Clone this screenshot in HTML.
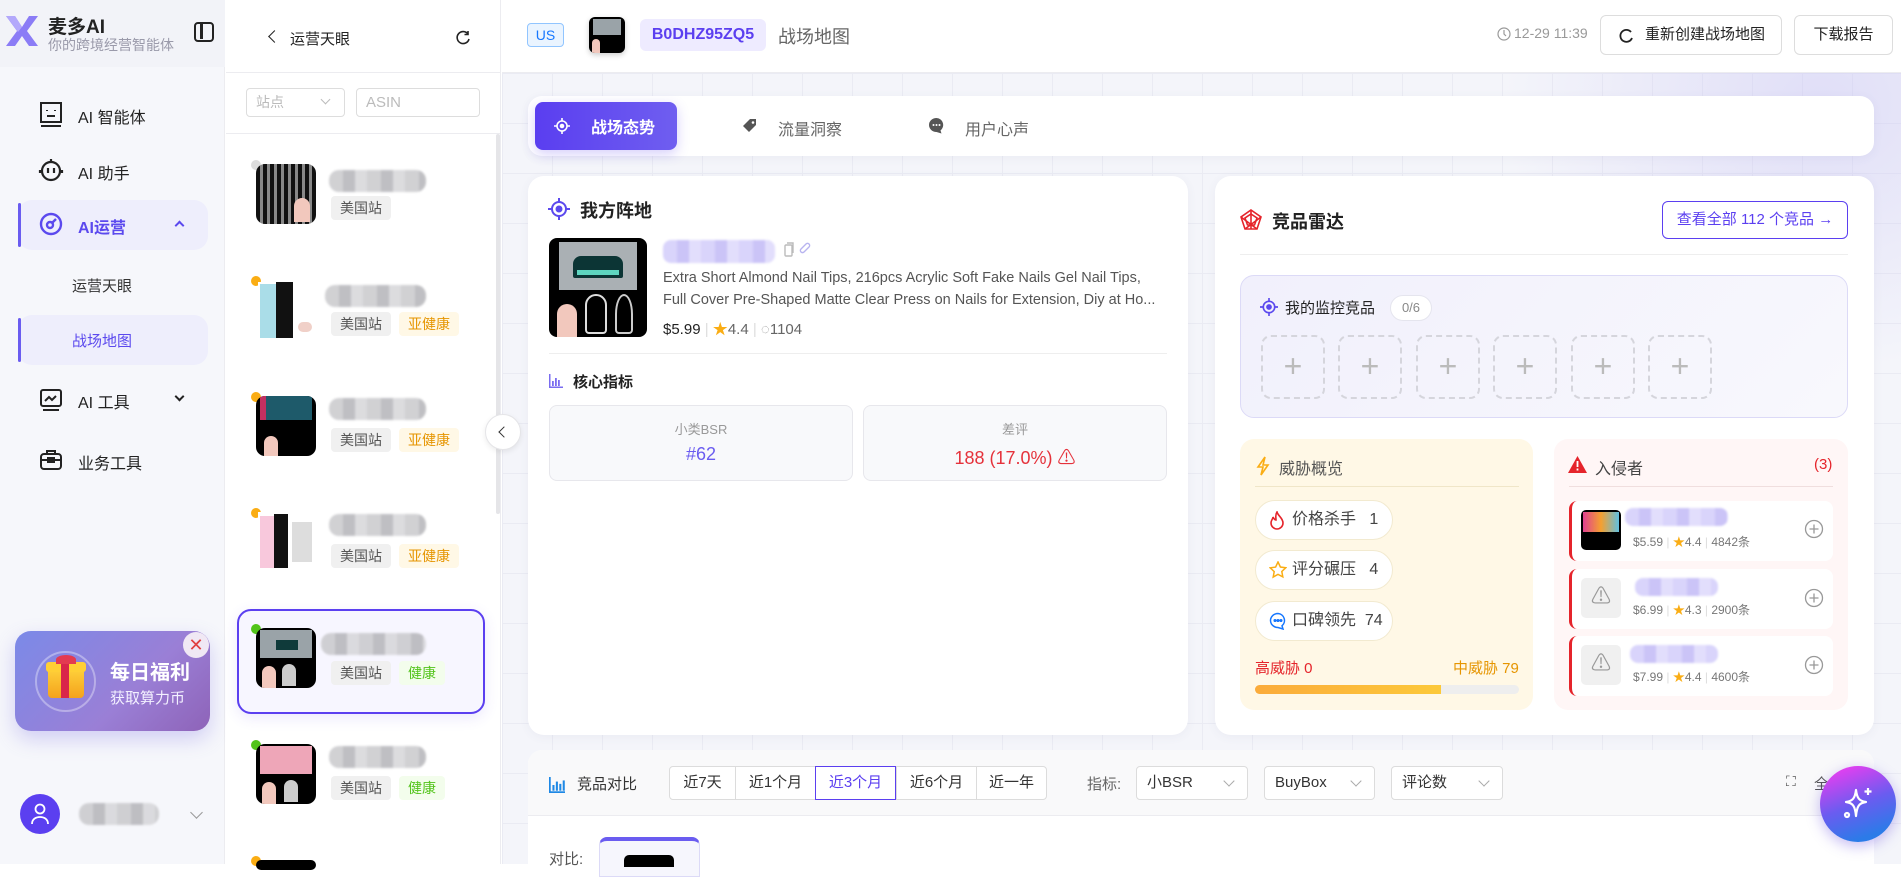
<!DOCTYPE html>
<html><head><meta charset="utf-8"><style>
*{box-sizing:border-box;margin:0;padding:0}
body{width:1901px;height:864px;overflow:hidden;font-family:"Liberation Sans","Noto Sans CJK SC",sans-serif;color:#333;background:#fff;position:relative}
.a{position:absolute}
.blur{position:absolute;border-radius:10px;background:repeating-linear-gradient(90deg,#c9c9cc 0 14px,#b5b5b9 14px 26px,#d6d6d9 26px 38px);opacity:.85;filter:blur(1px)}
.blurp{position:absolute;border-radius:8px;background:repeating-linear-gradient(90deg,#d9d4fb 0 14px,#cbc4f7 14px 26px,#e2defc 26px 38px);filter:blur(1px)}
.tag{position:absolute;height:24px;line-height:24px;font-size:14px;padding:0 9px;border-radius:4px}
.tg{background:#f0f0f0;color:#555}
.ty{background:#fff8e6;color:#e69500}
.tgr{background:#f3fdec;color:#52c41a}
.dot{position:absolute;width:10px;height:10px;border-radius:50%}
.nail{position:absolute;background:#000;border-radius:9px;overflow:hidden}
.card{position:absolute;background:#fff;border-radius:16px;box-shadow:0 2px 10px rgba(80,80,140,.06)}
.plus{position:absolute;width:64px;height:64px;border:2px dashed #d5d5dc;border-radius:10px;color:#bbb;font-size:32px;text-align:center;line-height:58px;font-weight:200}
.pill{position:absolute;left:1255px;width:138px;height:40px;background:#fff;border:1px solid #f2ead0;border-radius:20px;font-size:16px;line-height:38px;padding-left:36px;color:#444}
.pill svg{position:absolute;left:13px;top:10px}
.inv{position:absolute;left:1569px;width:264px;height:60px;background:#fff;border-radius:8px;border-left:3px solid #e5242b}
.seg{position:absolute;top:766px;height:34px;line-height:32px;font-size:15px;text-align:center;border:1px solid #dcdcdc;background:#fff}
.sel{position:absolute;top:766px;height:34px;line-height:32px;font-size:15px;padding-left:10px;border:1px solid #dcdcdc;border-radius:4px;background:#fff;color:#333}
.sel:after{content:"";position:absolute;right:14px;top:10px;width:7px;height:7px;border-right:1px solid #aaa;border-bottom:1px solid #aaa;transform:rotate(45deg)}
</style></head><body>

<!-- sidebar -->
<div class="a" style="left:0;top:0;width:225px;height:864px;background:#f6f7fb;border-right:1px solid #ececf0"></div>
<div class="a" style="left:0;top:0;width:225px;height:67px;background:#f2f3f8"></div>
<svg class="a" style="left:4px;top:14px" width="36" height="34" viewBox="0 0 36 34"><path d="M2 2h9l7 11 7-11h9L23 17l11 15h-9l-7-10-7 10H2l11-15z" fill="#8b7cf6"/><path d="M2 2h9l7 11-4 5z" fill="#b3a8fb"/></svg>
<div class="a" style="left:48px;top:12px;font-size:19px;font-weight:bold;color:#222">麦多AI</div>
<div class="a" style="left:48px;top:35px;font-size:14px;color:#9a9aaa">你的跨境经营智能体</div>
<div class="a" style="left:194px;top:22px;width:20px;height:20px;border:2.5px solid #222;border-radius:4px"><div style="position:absolute;left:4px;top:0;width:2.5px;height:15px;background:#222"></div></div>

<svg class="a" style="left:39px;top:101px" width="24" height="27" viewBox="0 0 24 27" fill="none" stroke="#222" stroke-width="2"><rect x="2" y="2" width="20" height="19"/><path d="M8 9v1M16 9v1M8 15h8M2 25h20"/></svg>
<div class="a" style="left:78px;top:104px;font-size:16px;color:#222">AI 智能体</div>
<svg class="a" style="left:38px;top:157px" width="26" height="26" viewBox="0 0 26 26" fill="none" stroke="#222" stroke-width="2.2"><circle cx="13" cy="14" r="9"/><path d="M13 2v3M10 11v5M16 11v5M2 13v3M24 13v3"/></svg>
<div class="a" style="left:78px;top:160px;font-size:16px;color:#222">AI 助手</div>
<div class="a" style="left:18px;top:200px;width:190px;height:50px;background:#eeeefc;border-radius:14px"></div>
<div class="a" style="left:18px;top:203px;width:3px;height:44px;background:#6a5cf0;border-radius:2px"></div>
<svg class="a" style="left:39px;top:212px" width="24" height="24" viewBox="0 0 24 24" fill="none" stroke="#5b49ee" stroke-width="2.4"><circle cx="12" cy="12" r="10"/><circle cx="11" cy="13" r="3"/><path d="M13 11l4-4"/></svg>
<div class="a" style="left:78px;top:214px;font-size:16px;font-weight:bold;color:#5b49ee">AI运营</div>
<div class="a" style="left:176px;top:222px;width:7px;height:7px;border-left:2px solid #5b49ee;border-top:2px solid #5b49ee;transform:rotate(45deg)"></div>
<div class="a" style="left:72px;top:275px;font-size:15px;color:#333">运营天眼</div>
<div class="a" style="left:18px;top:315px;width:190px;height:50px;background:#eeeefc;border-radius:14px"></div>
<div class="a" style="left:18px;top:318px;width:3px;height:44px;background:#6a5cf0;border-radius:2px"></div>
<div class="a" style="left:72px;top:330px;font-size:15px;color:#5b49ee">战场地图</div>
<svg class="a" style="left:39px;top:388px" width="24" height="24" viewBox="0 0 24 24" fill="none" stroke="#222" stroke-width="2"><rect x="2" y="2" width="20" height="16" rx="2"/><path d="M6 13l4-4 3 3 4-4M4 22h16"/></svg>
<div class="a" style="left:78px;top:389px;font-size:16px;color:#222">AI 工具</div>
<div class="a" style="left:176px;top:393px;width:7px;height:7px;border-right:2px solid #222;border-bottom:2px solid #222;transform:rotate(45deg)"></div>
<svg class="a" style="left:39px;top:448px" width="24" height="24" viewBox="0 0 24 24" fill="none" stroke="#222" stroke-width="2"><rect x="2" y="6" width="20" height="15" rx="3"/><path d="M8 6V3h8v3M2 12h20"/><rect x="9" y="10" width="6" height="4"/></svg>
<div class="a" style="left:78px;top:450px;font-size:16px;color:#222">业务工具</div>

<div class="a" style="left:15px;top:631px;width:195px;height:100px;border-radius:16px;background:linear-gradient(135deg,#7b8ae8,#9a7fd6 60%,#8e63b8);box-shadow:0 8px 20px rgba(120,110,230,.3)"></div>
<div class="a" style="left:35px;top:651px;width:61px;height:61px;border-radius:50%;border:2px solid rgba(255,255,255,.35)"></div>
<div class="a" style="left:48px;top:668px;width:36px;height:30px;background:linear-gradient(#ffd23c,#f4a21c);border-radius:4px"></div>
<div class="a" style="left:46px;top:662px;width:40px;height:10px;background:#ffcf35;border-radius:3px"></div>
<div class="a" style="left:61px;top:662px;width:8px;height:36px;background:#d9264a"></div>
<div class="a" style="left:56px;top:655px;width:20px;height:9px;border-radius:50% 50% 0 0;background:#e33a50"></div>
<div class="a" style="left:110px;top:656px;font-size:20px;font-weight:bold;color:#fff">每日福利</div>
<div class="a" style="left:110px;top:687px;font-size:15px;color:#f3f0ff">获取算力币</div>
<div class="a" style="left:183px;top:632px;width:26px;height:26px;border-radius:50%;background:#f0e8f4;color:#e04040;font-size:18px;text-align:center;line-height:26px">✕</div>

<div class="a" style="left:20px;top:794px;width:40px;height:40px;border-radius:50%;background:#5b3ff0"></div>
<svg class="a" style="left:30px;top:803px" width="20" height="22" viewBox="0 0 20 22" fill="none" stroke="#fff" stroke-width="1.8"><circle cx="10" cy="6" r="4.5"/><path d="M2 21c0-5 4-7 8-7s8 2 8 7"/></svg>
<div class="blur" style="left:79px;top:803px;width:80px;height:22px"></div>
<div class="a" style="left:192px;top:808px;width:9px;height:9px;border-right:1.5px solid #999;border-bottom:1.5px solid #999;transform:rotate(45deg)"></div>

<!-- list panel -->
<div class="a" style="left:226px;top:0;width:275px;height:864px;background:#fff;border-right:1px solid #ececf0"></div>
<div class="a" style="left:226px;top:72px;width:275px;height:1px;background:#ececf0"></div>
<div class="a" style="left:270px;top:32px;width:9px;height:9px;border-left:1.5px solid #222;border-bottom:1.5px solid #222;transform:rotate(45deg)"></div>
<div class="a" style="left:290px;top:28px;font-size:15px;color:#222">运营天眼</div>
<svg class="a" style="left:455px;top:30px" width="16" height="16" viewBox="0 0 16 16" fill="none" stroke="#222" stroke-width="1.6"><path d="M13 4A6 6 0 1 0 14 9"/><path d="M13 1v3.5H9.5"/></svg>
<div class="a" style="left:246px;top:88px;width:99px;height:29px;border:1px solid #ddd;border-radius:4px;font-size:14px;color:#bbb;line-height:27px;padding-left:9px">站点</div>
<div class="a" style="left:322px;top:96px;width:7px;height:7px;border-right:1px solid #bbb;border-bottom:1px solid #bbb;transform:rotate(45deg)"></div>
<div class="a" style="left:356px;top:88px;width:124px;height:29px;border:1px solid #ddd;border-radius:4px;font-size:15px;color:#bbb;line-height:27px;padding-left:9px">ASIN</div>
<div class="a" style="left:226px;top:133px;width:275px;height:1px;background:#ececf0"></div>
<div class="a" style="left:496px;top:134px;width:4px;height:380px;background:#e5e5e8;border-radius:2px"></div>

<!-- items -->
<div class="a" style="left:237px;top:609px;width:248px;height:105px;border:2.5px solid #5b3ff0;border-radius:14px;background:#f7f6ff;box-shadow:0 4px 14px rgba(91,63,240,.12)"></div>

<div class="dot" style="left:251px;top:160px;background:#ddd"></div>
<div class="nail" style="left:256px;top:164px;width:60px;height:60px;background:repeating-linear-gradient(90deg,#111 0 4px,#888 4px 7px)"><div style="position:absolute;left:38px;top:34px;width:16px;height:24px;background:#f2c8bd;border-radius:8px 8px 0 0"></div></div>
<div class="blur" style="left:329px;top:170px;width:97px;height:22px"></div>
<div class="tag tg" style="left:331px;top:196px">美国站</div>

<div class="dot" style="left:251px;top:276px;background:#faad14"></div>
<div class="a" style="left:258px;top:282px;width:58px;height:58px;background:#fff"><div style="position:absolute;left:2px;top:2px;width:16px;height:54px;background:#aadde8"></div><div style="position:absolute;left:18px;top:0;width:17px;height:56px;background:#111"></div><div style="position:absolute;left:40px;top:40px;width:14px;height:10px;background:#f0d0c8;border-radius:5px"></div></div>
<div class="blur" style="left:325px;top:285px;width:101px;height:22px"></div>
<div class="tag tg" style="left:331px;top:312px">美国站</div>
<div class="tag ty" style="left:399px;top:312px">亚健康</div>

<div class="dot" style="left:251px;top:392px;background:#faad14"></div>
<div class="nail" style="left:256px;top:396px;width:60px;height:60px"><div style="position:absolute;left:4px;top:0;width:52px;height:24px;background:#1e5a6a;border-left:6px solid #c23060"></div><div style="position:absolute;left:8px;top:40px;width:14px;height:20px;background:#f2c8bd;border-radius:7px 7px 0 0"></div></div>
<div class="blur" style="left:329px;top:398px;width:97px;height:22px"></div>
<div class="tag tg" style="left:331px;top:428px">美国站</div>
<div class="tag ty" style="left:399px;top:428px">亚健康</div>

<div class="dot" style="left:251px;top:508px;background:#faad14"></div>
<div class="a" style="left:258px;top:512px;width:58px;height:58px;background:#fff"><div style="position:absolute;left:2px;top:4px;width:14px;height:52px;background:#f8c8dc"></div><div style="position:absolute;left:16px;top:2px;width:14px;height:54px;background:#111"></div><div style="position:absolute;left:34px;top:10px;width:20px;height:40px;background:#ddd"></div></div>
<div class="blur" style="left:329px;top:514px;width:97px;height:22px"></div>
<div class="tag tg" style="left:331px;top:544px">美国站</div>
<div class="tag ty" style="left:399px;top:544px">亚健康</div>

<div class="dot" style="left:251px;top:624px;background:#52c41a"></div>
<div class="nail" style="left:256px;top:628px;width:60px;height:60px"><div style="position:absolute;left:4px;top:2px;width:52px;height:28px;background:#9aa3a8"></div><div style="position:absolute;left:20px;top:12px;width:22px;height:10px;background:#0f3a3a"></div><div style="position:absolute;left:6px;top:38px;width:14px;height:22px;background:#f2c8bd;border-radius:7px 7px 0 0"></div><div style="position:absolute;left:26px;top:36px;width:14px;height:22px;background:#ccc;border-radius:7px 7px 0 0"></div></div>
<div class="blur" style="left:321px;top:633px;width:105px;height:22px"></div>
<div class="tag tg" style="left:331px;top:661px">美国站</div>
<div class="tag tgr" style="left:399px;top:661px">健康</div>

<div class="dot" style="left:251px;top:740px;background:#52c41a"></div>
<div class="nail" style="left:256px;top:744px;width:60px;height:60px"><div style="position:absolute;left:4px;top:2px;width:52px;height:28px;background:#eea6b8"></div><div style="position:absolute;left:6px;top:38px;width:14px;height:22px;background:#f2c8bd;border-radius:7px 7px 0 0"></div><div style="position:absolute;left:28px;top:36px;width:14px;height:22px;background:#ccc;border-radius:7px 7px 0 0"></div></div>
<div class="blur" style="left:329px;top:746px;width:97px;height:22px"></div>
<div class="tag tg" style="left:331px;top:776px">美国站</div>
<div class="tag tgr" style="left:399px;top:776px">健康</div>

<div class="dot" style="left:251px;top:856px;background:#faad14"></div>
<div class="nail" style="left:256px;top:860px;width:60px;height:10px"></div>

<!-- main background -->
<div class="a" style="left:502px;top:73px;width:1399px;height:791px;background-color:#f4f5fa;background-image:linear-gradient(#eaebf3 1px,transparent 1px),linear-gradient(90deg,#eaebf3 1px,transparent 1px);background-size:50px 50px"></div>
<div class="a" style="left:1500px;top:73px;width:401px;height:300px;background:radial-gradient(ellipse at 80% 10%,rgba(200,195,245,.45),transparent 70%)"></div>
<div class="a" style="left:502px;top:0;width:1399px;height:73px;background:#fff;border-bottom:1px solid #ececf0"></div>

<div class="a" style="left:485px;top:414px;width:36px;height:36px;border-radius:50%;background:#fff;border:1px solid #e5e5e8;box-shadow:0 2px 6px rgba(0,0,0,.08)"></div>
<div class="a" style="left:500px;top:428px;width:8px;height:8px;border-left:1.5px solid #333;border-bottom:1.5px solid #333;transform:rotate(45deg)"></div>

<!-- top bar -->
<div class="a" style="left:527px;top:23px;width:37px;height:24px;border:1px solid #91c5ff;background:#eaf4ff;border-radius:4px;color:#1677ff;font-size:14px;text-align:center;line-height:22px">US</div>
<div class="nail" style="left:589px;top:17px;width:36px;height:36px;border-radius:6px;box-shadow:0 2px 6px rgba(0,0,0,.2)"><div style="position:absolute;left:4px;top:2px;width:28px;height:16px;background:#9aa3a8"></div><div style="position:absolute;left:3px;top:22px;width:8px;height:14px;background:#f2c8bd;border-radius:4px 4px 0 0"></div></div>
<div class="a" style="left:640px;top:19px;width:126px;height:32px;background:#eeebff;border-radius:6px;color:#5b3ff0;font-weight:bold;font-size:16px;text-align:center;line-height:32px">B0DHZ95ZQ5</div>
<div class="a" style="left:778px;top:23px;font-size:18px;color:#666">战场地图</div>
<svg class="a" style="left:1497px;top:27px" width="14" height="14" viewBox="0 0 14 14" fill="none" stroke="#999" stroke-width="1.2"><circle cx="7" cy="7" r="6"/><path d="M7 3v4l2 2"/></svg>
<div class="a" style="left:1514px;top:25px;font-size:14px;color:#999">12-29 11:39</div>
<div class="a" style="left:1600px;top:15px;width:182px;height:40px;border:1px solid #ddd;border-radius:6px;font-size:15px;line-height:38px;padding-left:44px;color:#222">重新创建战场地图</div>
<svg class="a" style="left:1618px;top:28px" width="16" height="16" viewBox="0 0 16 16" fill="none" stroke="#222" stroke-width="1.8"><path d="M13 4A6 6 0 1 0 14 10"/></svg>
<div class="a" style="left:1794px;top:15px;width:99px;height:40px;border:1px solid #ddd;border-radius:6px;font-size:15px;line-height:38px;text-align:center;color:#222">下载报告</div>

<!-- tabs -->
<div class="a" style="left:528px;top:96px;width:1346px;height:60px;background:#fff;border-radius:14px;box-shadow:0 2px 10px rgba(80,80,140,.06)"></div>
<div class="a" style="left:535px;top:102px;width:142px;height:48px;border-radius:8px;background:linear-gradient(90deg,#5a3ef0,#6f5ef0);box-shadow:0 4px 12px rgba(91,63,240,.25)"></div>
<svg class="a" style="left:554px;top:118px" width="16" height="16" viewBox="0 0 16 16" fill="none" stroke="#fff" stroke-width="1.6"><circle cx="8" cy="8" r="5"/><circle cx="8" cy="8" r="1.5" fill="#fff"/><path d="M8 0v3M8 13v3M0 8h3M13 8h3"/></svg>
<div class="a" style="left:591px;top:114px;font-size:16px;font-weight:bold;color:#fff">战场态势</div>
<svg class="a" style="left:742px;top:118px" width="16" height="16" viewBox="0 0 16 16"><path d="M8 1h6v6l-7 7-6-6z" fill="#555"/><circle cx="11" cy="4.5" r="1.3" fill="#fff"/></svg>
<div class="a" style="left:778px;top:116px;font-size:16px;color:#666">流量洞察</div>
<svg class="a" style="left:928px;top:117px" width="17" height="17" viewBox="0 0 17 17"><path d="M8.5 1a7.5 7 0 1 0 0 14l5 1.5-1-3A7 7 0 0 0 8.5 1z" fill="#555"/><circle cx="5.5" cy="8" r="1" fill="#fff"/><circle cx="8.5" cy="8" r="1" fill="#fff"/><circle cx="11.5" cy="8" r="1" fill="#fff"/></svg>
<div class="a" style="left:965px;top:116px;font-size:16px;color:#666">用户心声</div>

<!-- left card -->
<div class="card" style="left:528px;top:176px;width:660px;height:559px"></div>
<svg class="a" style="left:548px;top:198px" width="22" height="22" viewBox="0 0 22 22" fill="none" stroke="#5b49ee" stroke-width="2"><circle cx="11" cy="11" r="7"/><circle cx="11" cy="11" r="2.5" fill="#5b49ee"/><path d="M11 0v4M11 18v4M0 11h4M18 11h4"/></svg>
<div class="a" style="left:580px;top:197px;font-size:18px;font-weight:bold;color:#222">我方阵地</div>
<div class="nail" style="left:549px;top:238px;width:98px;height:99px;border-radius:8px"><div style="position:absolute;left:10px;top:4px;width:78px;height:48px;background:#aab0b4"></div><div style="position:absolute;left:24px;top:18px;width:50px;height:22px;background:#0c3535;border-radius:8px 8px 2px 2px"></div><div style="position:absolute;left:28px;top:32px;width:42px;height:5px;background:#5ed6c0"></div><div style="position:absolute;left:8px;top:66px;width:20px;height:33px;background:#f2c8bd;border-radius:10px 10px 0 0"></div><div style="position:absolute;left:36px;top:56px;width:22px;height:40px;border:2px solid #ddd;border-radius:11px 11px 4px 4px"></div><div style="position:absolute;left:66px;top:56px;width:18px;height:40px;border:2px solid #ccc;border-radius:50% 50% 4px 4px"></div></div>
<div class="blurp" style="left:663px;top:240px;width:112px;height:23px"></div>
<svg class="a" style="left:782px;top:242px" width="30" height="16" viewBox="0 0 30 16" fill="none" stroke="#bbb" stroke-width="1.4"><rect x="3" y="3" width="7" height="11" rx="1"/><path d="M5 1h6v10"/><path d="M22 10l5-5a2 2 0 0 0-3-3l-5 5a2 2 0 0 0 3 3" stroke="#b8b4f0"/></svg>
<div class="a" style="left:663px;top:267px;font-size:14.5px;line-height:22px;color:#555;width:500px">Extra Short Almond Nail Tips, 216pcs Acrylic Soft Fake Nails Gel Nail Tips,<br>Full Cover Pre-Shaped Matte Clear Press on Nails for Extension, Diy at Ho...</div>
<div class="a" style="left:663px;top:318px;font-size:15px;color:#222">$5.99 <span style="color:#ddd">|</span> <span style="color:#faad14">★</span><span style="color:#666">4.4</span> <span style="color:#ddd">|</span> <span style="color:#999">◌</span><span style="color:#666">1104</span></div>
<div class="a" style="left:549px;top:353px;width:618px;height:1px;background:#eee"></div>
<svg class="a" style="left:549px;top:374px" width="14" height="14" viewBox="0 0 14 14" fill="#7a6cf0"><rect x="0" y="0" width="1.5" height="14"/><rect x="0" y="12.5" width="14" height="1.5"/><rect x="3" y="7" width="1.8" height="5"/><rect x="6" y="4" width="1.8" height="8"/><rect x="9" y="6" width="1.8" height="6"/></svg>
<div class="a" style="left:573px;top:371px;font-size:15px;font-weight:bold;color:#222">核心指标</div>
<div class="a" style="left:549px;top:405px;width:304px;height:76px;background:#f8f9fb;border:1px solid #e7e7ec;border-radius:8px"></div>
<div class="a" style="left:549px;top:419px;width:304px;text-align:center;font-size:13px;color:#999">小类BSR</div>
<div class="a" style="left:549px;top:444px;width:304px;text-align:center;font-size:18px;color:#6a5cf0">#62</div>
<div class="a" style="left:863px;top:405px;width:304px;height:76px;background:#f8f9fb;border:1px solid #e7e7ec;border-radius:8px"></div>
<div class="a" style="left:863px;top:419px;width:304px;text-align:center;font-size:13px;color:#999">差评</div>
<div class="a" style="left:863px;top:444px;width:304px;text-align:center;font-size:18px;color:#e5323b">188 (17.0%) ⚠</div>

<!-- right card -->
<div class="card" style="left:1215px;top:176px;width:659px;height:559px"></div>
<svg class="a" style="left:1240px;top:209px" width="22" height="22" viewBox="0 0 22 22" fill="none" stroke="#e5242b" stroke-width="1.6"><path d="M11 1l10 7-4 12H5L1 8z"/><path d="M11 5l6 4-2.5 7h-7L5 9z"/><path d="M11 1v19M1 8l16 12M21 8L5 20"/></svg>
<div class="a" style="left:1272px;top:208px;font-size:18px;font-weight:bold;color:#222">竞品雷达</div>
<div class="a" style="left:1662px;top:201px;width:186px;height:38px;border:1.5px solid #5b3ff0;border-radius:6px;color:#5b3ff0;font-size:15px;text-align:center;line-height:35px">查看全部 112 个竞品 →</div>
<div class="a" style="left:1240px;top:254px;width:608px;height:1px;background:#eee"></div>
<div class="a" style="left:1240px;top:275px;width:608px;height:143px;background:linear-gradient(135deg,#f1f0fc,#f8f8fd);border:1px solid #dcdaf7;border-radius:14px"></div>
<svg class="a" style="left:1260px;top:298px" width="18" height="18" viewBox="0 0 22 22" fill="none" stroke="#5b49ee" stroke-width="2"><circle cx="11" cy="11" r="7"/><circle cx="11" cy="11" r="2.5" fill="#5b49ee"/><path d="M11 0v4M11 18v4M0 11h4M18 11h4"/></svg>
<div class="a" style="left:1285px;top:297px;font-size:15px;color:#222">我的监控竞品</div>
<div class="a" style="left:1390px;top:295px;width:42px;height:26px;border:1px solid #e5e5ee;border-radius:13px;background:#fff;font-size:13px;color:#888;text-align:center;line-height:24px">0/6</div>
<div class="plus" style="left:1261px;top:335px">+</div>
<div class="plus" style="left:1338px;top:335px">+</div>
<div class="plus" style="left:1416px;top:335px">+</div>
<div class="plus" style="left:1493px;top:335px">+</div>
<div class="plus" style="left:1571px;top:335px">+</div>
<div class="plus" style="left:1648px;top:335px">+</div>

<div class="a" style="left:1240px;top:439px;width:293px;height:271px;background:#fff8e6;border-radius:14px"></div>
<svg class="a" style="left:1256px;top:456px" width="14" height="20" viewBox="0 0 14 20" fill="none" stroke="#faad14" stroke-width="1.6"><path d="M9 1L2 11h5l-2 8 7-10H7z"/></svg>
<div class="a" style="left:1279px;top:455px;font-size:16px;color:#555">威胁概览</div>
<div class="a" style="left:1255px;top:486px;width:264px;height:1px;background:#f0e6c8"></div>
<div class="pill" style="top:500px"><svg width="16" height="19" viewBox="0 0 16 19" fill="none" stroke="#e5242b" stroke-width="1.6"><path d="M8 1c1 4 6 6 6 11a6 6 0 0 1-12 0c0-3 2-4 2-6 1 2 2 3 3 3 0-3-1-5 1-8z"/></svg>价格杀手 &nbsp;&nbsp;1</div>
<div class="pill" style="top:550px"><svg width="18" height="18" viewBox="0 0 18 18" fill="none" stroke="#faad14" stroke-width="1.5"><path d="M9 1l2.4 5 5.4.7-4 3.8 1 5.4L9 13.3 4.2 16l1-5.4-4-3.8 5.4-.7z"/></svg>评分碾压 &nbsp;&nbsp;4</div>
<div class="pill" style="top:601px"><svg width="18" height="18" viewBox="0 0 18 18" fill="none" stroke="#1677ff" stroke-width="1.5"><path d="M9 1.5a7.5 7 0 1 0 0 14l5 1.5-1-3.2A7 7 0 0 0 9 1.5z"/><circle cx="6" cy="8.5" r=".8" fill="#1677ff"/><circle cx="9" cy="8.5" r=".8" fill="#1677ff"/><circle cx="12" cy="8.5" r=".8" fill="#1677ff"/></svg>口碑领先 &nbsp;74</div>
<div class="a" style="left:1255px;top:657px;font-size:15px;color:#e5242b">高威胁 0</div>
<div class="a" style="left:1453px;top:657px;font-size:15px;color:#e69500">中威胁 79</div>
<div class="a" style="left:1255px;top:685px;width:264px;height:9px;background:#eee;border-radius:5px"><div style="width:186px;height:9px;border-radius:5px 0 0 5px;background:linear-gradient(90deg,#fbab3a,#fcc93a)"></div></div>

<div class="a" style="left:1554px;top:439px;width:294px;height:271px;background:#fff6f6;border-radius:14px"></div>
<svg class="a" style="left:1568px;top:456px" width="19" height="17" viewBox="0 0 19 17"><path d="M9.5 0L19 17H0z" fill="#e5242b"/><rect x="8.6" y="5" width="1.8" height="6" fill="#fff"/><rect x="8.6" y="12.5" width="1.8" height="2" fill="#fff"/></svg>
<div class="a" style="left:1595px;top:455px;font-size:16px;color:#444">入侵者</div>
<div class="a" style="left:1814px;top:456px;font-size:15px;color:#e5242b">(3)</div>
<div class="a" style="left:1569px;top:486px;width:264px;height:1px;background:#f0dede"></div>

<div class="inv" style="top:501px"></div>
<div class="nail" style="left:1581px;top:510px;width:40px;height:40px;border-radius:5px"><div style="position:absolute;left:2px;top:2px;width:36px;height:20px;background:linear-gradient(90deg,#e04090,#f5a030,#60c0e0)"></div></div>
<div class="blurp" style="left:1625px;top:508px;width:103px;height:18px"></div>
<div class="a" style="left:1633px;top:533px;font-size:12px;color:#777">$5.59 <span style="color:#ddd">|</span> <span style="color:#faad14">★</span>4.4 <span style="color:#ddd">|</span> 4842条</div>
<svg class="a" style="left:1804px;top:519px" width="20" height="20" viewBox="0 0 20 20" fill="none" stroke="#999" stroke-width="1.3"><circle cx="10" cy="10" r="8.5"/><path d="M10 5.5v9M5.5 10h9"/></svg>

<div class="inv" style="top:569px"></div>
<div class="a" style="left:1581px;top:578px;width:40px;height:40px;border-radius:5px;background:#f0f0f0;color:#999;font-size:20px;text-align:center;line-height:38px">⚠</div>
<div class="blurp" style="left:1635px;top:578px;width:83px;height:18px"></div>
<div class="a" style="left:1633px;top:601px;font-size:12px;color:#777">$6.99 <span style="color:#ddd">|</span> <span style="color:#faad14">★</span>4.3 <span style="color:#ddd">|</span> 2900条</div>
<svg class="a" style="left:1804px;top:588px" width="20" height="20" viewBox="0 0 20 20" fill="none" stroke="#999" stroke-width="1.3"><circle cx="10" cy="10" r="8.5"/><path d="M10 5.5v9M5.5 10h9"/></svg>

<div class="inv" style="top:636px"></div>
<div class="a" style="left:1581px;top:645px;width:40px;height:40px;border-radius:5px;background:#f0f0f0;color:#999;font-size:20px;text-align:center;line-height:38px">⚠</div>
<div class="blurp" style="left:1630px;top:645px;width:88px;height:18px"></div>
<div class="a" style="left:1633px;top:668px;font-size:12px;color:#777">$7.99 <span style="color:#ddd">|</span> <span style="color:#faad14">★</span>4.4 <span style="color:#ddd">|</span> 4600条</div>
<svg class="a" style="left:1804px;top:655px" width="20" height="20" viewBox="0 0 20 20" fill="none" stroke="#999" stroke-width="1.3"><circle cx="10" cy="10" r="8.5"/><path d="M10 5.5v9M5.5 10h9"/></svg>

<!-- bottom card -->
<div class="a" style="left:528px;top:750px;width:1346px;height:114px;background:#fff;border-radius:14px 14px 0 0"></div>
<div class="a" style="left:528px;top:750px;width:1346px;height:66px;background:#f9f9fa;border-radius:14px 14px 0 0;border-bottom:1px solid #ececf0"></div>
<svg class="a" style="left:549px;top:777px" width="16" height="16" viewBox="0 0 14 14" fill="#1e88e5"><rect x="0" y="0" width="1.5" height="14"/><rect x="0" y="12.5" width="14" height="1.5"/><rect x="3" y="7" width="1.8" height="5"/><rect x="6" y="4" width="1.8" height="8"/><rect x="9" y="6" width="1.8" height="6"/><rect x="12" y="3" width="1.8" height="9"/></svg>
<div class="a" style="left:577px;top:773px;font-size:15px;color:#333">竞品对比</div>
<div class="seg" style="left:669px;width:67px;border-radius:4px 0 0 4px">近7天</div>
<div class="seg" style="left:735px;width:81px">近1个月</div>
<div class="seg" style="left:896px;width:81px">近6个月</div>
<div class="seg" style="left:976px;width:71px;border-radius:0 4px 4px 0">近一年</div>
<div class="seg" style="left:815px;width:81px;border-color:#5b3ff0;color:#5b3ff0">近3个月</div>
<div class="a" style="left:1087px;top:773px;font-size:15px;color:#666">指标:</div>
<div class="sel" style="left:1136px;width:112px">小BSR</div>
<div class="sel" style="left:1264px;width:111px">BuyBox</div>
<div class="sel" style="left:1391px;width:112px">评论数</div>
<div class="a" style="left:1786px;top:773px;font-size:14px;color:#555">⛶</div>
<div class="a" style="left:1814px;top:773px;font-size:15px;color:#555">全</div>
<div class="a" style="left:549px;top:848px;font-size:15px;color:#555">对比:</div>
<div class="a" style="left:599px;top:837px;width:101px;height:40px;border-radius:8px 8px 0 0;border:1px solid #dcdaf7;border-top:4px solid #6a5cf0;background:#f6f6fd"></div>
<div class="nail" style="left:624px;top:855px;width:50px;height:12px;border-radius:5px 5px 0 0"></div>

<!-- floating -->
<div class="a" style="left:1820px;top:766px;width:76px;height:76px;border-radius:50%;background:linear-gradient(160deg,#e23ff0 10%,#6a5cf0 50%,#2b7be8 85%);box-shadow:0 4px 14px rgba(90,60,220,.35)"></div>
<svg class="a" style="left:1838px;top:784px" width="40" height="40" viewBox="0 0 40 40" fill="none" stroke="#fff" stroke-width="2.2" stroke-linejoin="round"><path d="M18 6c1 8 3 11 10 12-7 1-9 4-10 14-1-10-3-13-10-14 7-1 9-4 10-12z"/><path d="M30 4v7M26.5 7.5h7"/><circle cx="9" cy="31" r="2"/></svg>
</body></html>
